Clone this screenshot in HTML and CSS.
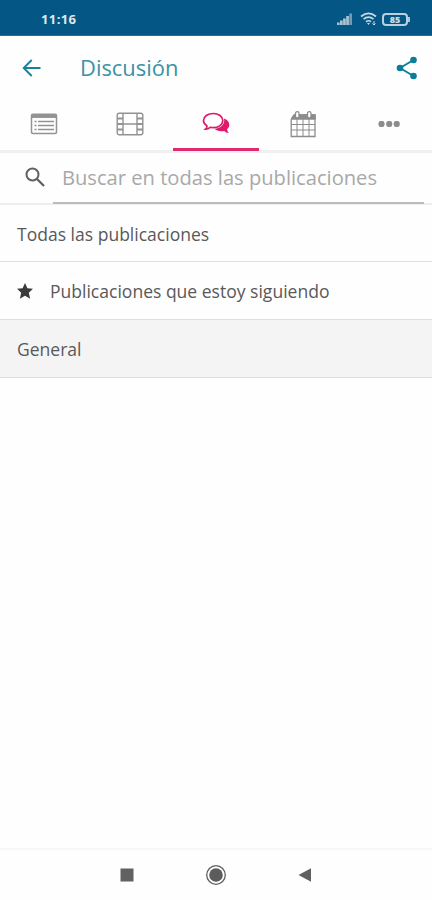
FILE: index.html
```html
<!DOCTYPE html>
<html lang="es">
<head>
<meta charset="utf-8">
<meta name="viewport" content="width=device-width, initial-scale=1">
<title>Discusión</title>
<link rel="stylesheet" href="styles.css">
</head>
<body>
<div class="screen">
  <div class="status">
    <span class="clock">11:16</span>
    <div class="indicators">
      <svg width="16" height="12" viewBox="0 0 16 12" fill="#a9c3d5"><path d="M0 9.500h2.600V12H0zM3 7.500h2.700V12H3zM6.100 5.500h2.700V12H6.100zM9.200 3h2.700v9H9.200z"/><path d="M12.300 .5H15V12h-2.700z" opacity=".65"/></svg>
      <svg class="wifi" width="18" height="14" viewBox="0 0 18 14" fill="none" stroke="#c5d8e4" stroke-width="1.700"><path d="M1 4.500Q8.500-1.900 16 4.500M3.500 7.200Q8.500 3 13.500 7.200M6 9.700q2.500-1.900 5 0"/><path d="M7 11h3l-1.500 2z" fill="#c5d8e4" stroke="none"/><path d="M14 9v4M12.500 11.500l1.500 1.500 1.500-1.500" stroke-width="1"/></svg>
      <span class="battery">85</span><span class="cap"></span>
    </div>
  </div>
  <header class="bar">
    <svg width="20" height="18" viewBox="0 0 20 18" fill="none" stroke="#16839a" stroke-width="1.900"><path d="M9.700 1 1.700 9l8 8M2 9h16.500"/></svg>
    <h1 class="title">Discusión</h1>
    <svg class="share" width="22" height="24" viewBox="0 0 22 24" fill="#087f94"><path d="M17.500 4 4 12l13.500 8" fill="none" stroke="#087f94" stroke-width="1.900"/><circle cx="17.500" cy="4" r="3.300"/><circle cx="4" cy="12" r="3.300"/><circle cx="17.500" cy="20" r="3.300"/></svg>
  </header>
  <nav class="tabs">
    <div class="tab"><svg width="28" height="28" viewBox="0 0 28 28" fill="none" stroke="#929292" stroke-width="1.500"><rect x="1.500" y="4.200" width="25" height="19.300" rx="1.500"/><path d="M1.500 6.200h25" stroke-width="3.500"/><path d="M8 11.500h16M8 15.500h16M8 19.500h16" stroke-width="1.400"/><path d="M4.500 11.500h2M4.500 15.500h2M4.500 19.500h2" stroke-width="1.700"/></svg></div>
    <div class="tab"><svg width="28" height="28" viewBox="0 0 28 28" fill="none" stroke="#929292" stroke-width="1.400"><rect x="1.200" y="3.200" width="25.600" height="21.600" rx="2"/><path d="M7 3v22M21 3v22M7 14h14"/><path d="M1 8.500h6M1 14h6M1 19.500h6M21 8.500h6M21 14h6M21 19.500h6" stroke-width="1.900"/></svg></div>
    <div class="tab active"><svg width="28" height="28" viewBox="0 0 28 28"><path d="M22 8.500c3.300 1.100 5.300 3.400 5.300 6.300 0 1.900-.8 3.400-2.200 4.400.1 1.600.7 2.600 1.700 3.300-.4.800-3 .2-4.600-1.600-3.800.8-7.800 0-9.700-2.100 5.900-.3 10.900-4.600 9.500-10.300z" fill="#e0196b"/><path d="M11.200 3.500c5.400 0 9.600 3.100 9.600 7.100s-4.200 7.100-9.600 7.100q-1.500 0-3-.4c-1.400 1.200-2.900 1.800-4.700 1.800 1-.9 1.500-2 1.500-3.200-2.200-1.200-3.500-3.100-3.500-5.300 0-4 4.300-7.100 9.700-7.100z" fill="#fff" stroke="#e0196b" stroke-width="1.700"/></svg></div>
    <div class="tab"><svg width="28" height="28" viewBox="0 0 28 28" fill="none" stroke="#8c8c8c" stroke-width="1.300"><path d="M2.200 9.500 5 5h21v21.500H2.200z"/><path d="M3 8 5.500 5H26v4H3z" fill="#8c8c8c"/><path d="M2 14.500h24M2 20h24M8 9v17M14 9v17M20 9v17" stroke-width="1"/><rect x="6.500" y="1.700" width="3.500" height="6.300" rx="1.700" fill="#fff"/><rect x="18.500" y="1.700" width="3.500" height="6.300" rx="1.700" fill="#fff"/></svg></div>
    <div class="tab"><svg width="28" height="28" viewBox="0 0 28 28" fill="#8c8c8c"><rect x="3.500" y="11" width="6" height="6" rx="2.300"/><rect x="11.200" y="11" width="6" height="6" rx="2.300"/><rect x="18.700" y="11" width="6" height="6" rx="2.300"/></svg></div>
  </nav>
  <div class="search">
    <svg width="20" height="20" viewBox="0 0 20 20" fill="none" stroke="#606060"><circle cx="7.500" cy="7.500" r="6" stroke-width="2"/><path d="m12 12 7 7" stroke-width="2.300"/></svg>
    <div class="field"><span class="hint">Buscar en todas las publicaciones</span></div>
  </div>
  <main class="list">
    <div class="row"><span class="all">Todas las publicaciones</span></div>
    <div class="row"><svg class="star" width="16" height="16" viewBox="0 0 16 16" fill="#3b3b3b"><path d="m8 0 2.400 5.200 5.600.6-4.200 3.900 1.300 6-5.100-3-5.100 3 1.300-6L0 5.800l5.600-.6z"/></svg><span class="following">Publicaciones que estoy siguiendo</span></div>
    <div class="row selected"><span class="general">General</span></div>
  </main>
  <footer class="keys">
    <svg width="14" height="14" viewBox="0 0 14 14"><path d="M.5.500h13v13H.5z" fill="#616161"/></svg>
    <svg width="22" height="22" viewBox="0 0 22 22"><circle cx="11" cy="11" r="9.300" fill="none" stroke="#606060" stroke-width="1.300"/><circle cx="11" cy="11" r="6.800" fill="#5c5c5c"/></svg>
    <svg width="14" height="14" viewBox="0 0 14 14"><path d="M13 .2v13.600L.5 7z" fill="#606060"/></svg>
  </footer>
</div>
</body>
</html>
```
FILE: styles.css
```css
* { box-sizing: border-box; }
body { margin: 0; background: #fff; font-family: "Open Sans", "Noto Sans", sans-serif; }
svg { display: block; flex: none; }
.screen { width: 432px; height: 900px; display: flex; flex-direction: column; overflow: hidden; background: #fefefe; }
.status { height: 36px; flex: none; background: #045684; display: flex; align-items: center; justify-content: space-between; padding: 3px 22px 0 41px; border-bottom: 1px solid #2a6d95; }
.clock { font-size: 13px; font-weight: 700; color: #dce8ef; letter-spacing: .4px; }
.indicators { display: flex; align-items: center; }
.wifi { margin-left: 7px; }
.battery { margin-left: 4px; width: 26px; height: 13px; border: 2px solid #b9d0de; border-radius: 4px; color: #c9dce7; font-size: 9px; font-weight: 800; line-height: 9px; text-align: center; }
.cap { width: 2px; height: 5px; background: #a9c5d6; }
.bar { height: 63px; flex: none; display: flex; align-items: center; padding: 0 14px 0 22px; }
.title { margin: 0 0 0 38px; font-size: 21.900px; font-weight: 400; color: #3992a5; white-space: nowrap; }
.share { margin-left: auto; }
.tabs { height: 54px; flex: none; display: grid; grid-template-columns: repeat(5, 1fr); border-bottom: 3px solid #f0f0f0; }
.tab { display: flex; justify-content: center; padding: 11px 0 0 1px; }
.active { height: 52px; border-bottom: 3px solid #df2a70; }
.search { height: 52px; flex: none; display: flex; align-items: center; padding: 0 8px 0 25px; border-bottom: 2px solid #eee; }
.search svg { margin-top: -2px; }
.field { align-self: flex-start; height: 51px; flex: 1; margin-left: 8px; padding: 0 0 2px 9px; display: flex; align-items: center; border-bottom: 2px solid #bcbcbc; }
.hint { font-size: 20.150px; font-weight: 400; color: #a8a8a8; white-space: nowrap; }
.list { flex: 1; }
.row { height: 58px; display: flex; align-items: center; padding: 1px 17px 0; border-bottom: 1px solid #dfdfdf; font-size: 17.550px; color: #595959; white-space: nowrap; }
.row:first-child { height: 57px; }
.star { margin: 0 17px 0 0; }
.selected { background: #f4f4f4; }
.keys { height: 52px; flex: none; border-top: 2px solid #f6f6f6; display: flex; align-items: center; justify-content: space-between; padding: 0 120px; }
```
